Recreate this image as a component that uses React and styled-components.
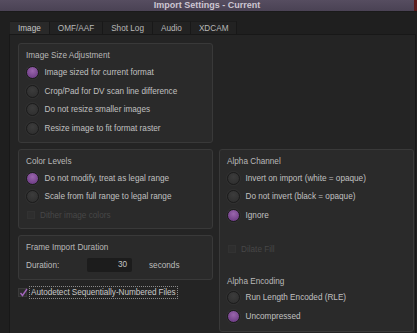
import React from "react";
import styled, { createGlobalStyle, css } from "styled-components";

const Global = createGlobalStyle`
  html, body { margin: 0; padding: 0; background: #1f1f1f; }
  body { font-family: "Liberation Sans", Arial, sans-serif; width: 417px; height: 333px; overflow: hidden; }
  * { box-sizing: border-box; }
`;

const Window = styled.div`
  width: 417px;
  height: 333px;
  display: flex;
  flex-direction: column;
  background: #1f1f1f;
`;

const TitleBar = styled.div`
  height: 12px;
  display: flex;
  background: linear-gradient(#564d60, #4a4254);
  border-bottom: 1px solid #1a1a1a;
`;

const TitleText = styled.div`
  flex: 1;
  text-align: center;
  font-weight: bold;
  font-size: 9px;
  line-height: 11px;
  color: #cdc6d2;
`;

const TitleEdge = styled.div`
  width: 3px;
  background: #5a1c1c;
`;

const Tabs = styled.div`
  display: flex;
  margin: 9px 0 0 10px;
  height: 13px;
`;

const Tab = styled.div`
  height: 13px;
  padding: 0 8px;
  font-size: 8.2px;
  line-height: 13px;
  color: #b8b8b8;
  background: #222;
  border-right: 1px solid #181818;
  border-top: 1px solid #1b1b1b;
  ${(p) =>
    p.$active &&
    css`
      background: #292929;
      color: #c6c6c6;
    `}
`;

const Pane = styled.div`
  flex: 1;
  margin-left: 9px;
  width: 407px;
  background: #242424;
  border: 1px solid #181818;
  border-bottom: none;
  padding: 8px 1px 0 8px;
  display: grid;
  grid-template-columns: 195px 195px;
  grid-template-rows: auto 1fr;
  column-gap: 6px;
  row-gap: 6px;
  align-content: start;
  align-items: start;
`;

const Group = styled.div`
  background: #2a2a2a;
  border: 1px solid #393939;
  border-radius: 3px;
  padding: 7px 7px ${(p) => p.$pb ?? 4}px;
  color: #bdbdbd;
  font-size: 8.2px;
`;

const GroupTitle = styled.div`
  line-height: 10px;
  height: 10px;
  margin-bottom: 2px;
  margin-top: ${(p) => p.$mt ?? 0}px;
  color: #b9b9b9;
  white-space: nowrap;
`;

const Row = styled.div`
  display: flex;
  align-items: center;
  height: ${(p) => p.$h ?? 18.7}px;
  margin-top: ${(p) => p.$mt ?? 0}px;
  white-space: nowrap;
  color: ${(p) => (p.$disabled ? "#474747" : "#c0c0c0")};
`;

const Radio = styled.span`
  width: 13px;
  height: 13px;
  border-radius: 50%;
  flex: none;
  margin: 0 6px 0 -0.5px;
  border: 1px solid #1c1c1c;
  box-shadow: 0 0 0 1px rgba(255, 255, 255, 0.03);
  background: ${(p) =>
    p.$on
      ? "radial-gradient(circle at 50% 35%, #9a66ad, #73428a 70%, #5c3370)"
      : "radial-gradient(circle at 50% 35%, #3c3c3c, #313131 70%, #2b2b2b)"};
`;

const SmallBox = styled.span`
  width: 8px;
  height: 8px;
  flex: none;
  margin: 0 5px 0 1px;
  background: #2e2e2e;
  border: 1px solid #323232;
`;

const LeftCol = styled.div`
  display: flex;
  flex-direction: column;
  gap: 6px;
`;

const DurationRow = styled.div`
  display: flex;
  align-items: center;
  height: 14px;
  margin-top: 5px;
  color: #bdbdbd;
`;

const DurLabel = styled.span`
  width: 61px;
`;

const DurInput = styled.div`
  width: 45px;
  height: 14px;
  line-height: 14px;
  background: #1c1c1c;
  border-radius: 2px;
  text-align: right;
  padding-right: 5px;
  color: #c4c4c4;
  margin-right: 17px;
`;

const CheckRow = styled.div`
  display: flex;
  align-items: center;
  height: 13px;
  font-size: 8.2px;
  color: #c8c8c8;
  white-space: nowrap;
`;

const CheckBox = styled.span`
  width: 9px;
  height: 9px;
  flex: none;
  background: #2c2c2c;
  border: 1px solid #3a3a3a;
  margin-right: 2px;
  position: relative;
  svg { position: absolute; left: -1px; top: -2px; }
`;

const FocusLabel = styled.span`
  border: 1px dotted #8a8a8a;
  height: 13px;
  line-height: 11px;
  padding: 0 1px;
  letter-spacing: -0.05px;
`;

const radioRows = (items, on) =>
  items.map((t, i) => (
    <Row key={t}>
      <Radio $on={i === on} />
      {t}
    </Row>
  ));

export default function App() {
  return (
    <>
      <Global />
      <Window>
        <TitleBar>
          <TitleText>Import Settings - Current</TitleText>
          <TitleEdge />
        </TitleBar>
        <Tabs>
          <Tab $active>Image</Tab>
          <Tab>OMF/AAF</Tab>
          <Tab>Shot Log</Tab>
          <Tab>Audio</Tab>
          <Tab>XDCAM</Tab>
        </Tabs>
        <Pane>
          <Group>
            <GroupTitle>Image Size Adjustment</GroupTitle>
            {radioRows(
              [
                "Image sized for current format",
                "Crop/Pad for DV scan line difference",
                "Do not resize smaller images",
                "Resize image to fit format raster",
              ],
              0
            )}
          </Group>
          <div />
          <LeftCol>
            <Group>
              <GroupTitle>Color Levels</GroupTitle>
              {radioRows(
                ["Do not modify, treat as legal range", "Scale from full range to legal range"],
                0
              )}
              <Row $disabled $h={18.3}>
                <SmallBox />
                Dither image colors
              </Row>
            </Group>
            <Group $pb={7}>
              <GroupTitle>Frame Import Duration</GroupTitle>
              <DurationRow>
                <DurLabel>Duration:</DurLabel>
                <DurInput>30</DurInput>
                seconds
              </DurationRow>
            </Group>
            <CheckRow>
              <CheckBox>
                <svg width="11" height="11" viewBox="0 0 11 11">
                  <polyline
                    points="2.5,6 4.5,8.5 9,2"
                    fill="none"
                    stroke="#a365bd"
                    strokeWidth="1.4"
                  />
                </svg>
              </CheckBox>
              <FocusLabel>Autodetect Sequentially-Numbered Files</FocusLabel>
            </CheckRow>
          </LeftCol>
          <Group $pb={5}>
            <GroupTitle>Alpha Channel</GroupTitle>
            {radioRows(
              ["Invert on import (white = opaque)", "Do not invert (black = opaque)", "Ignore"],
              2
            )}
            <Row $disabled $mt={15}>
              <SmallBox />
              Dilate Fill
            </Row>
            <GroupTitle $mt={18}>Alpha Encoding</GroupTitle>
            {radioRows(["Run Length Encoded (RLE)", "Uncompressed"], 1)}
          </Group>
        </Pane>
      </Window>
    </>
  );
}
